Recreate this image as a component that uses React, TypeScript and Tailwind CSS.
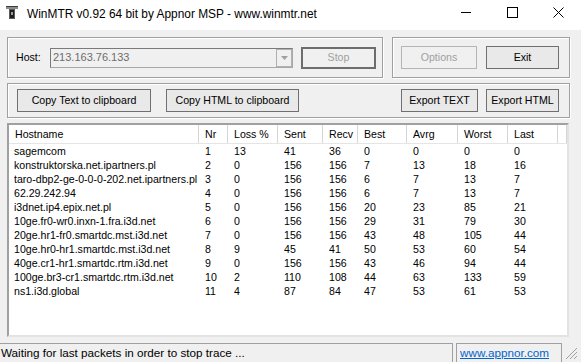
const rows = [
  ["sagemcom", "1", "13", "41", "36", "0", "0", "0", "0"],
  ["konstruktorska.net.ipartners.pl", "2", "0", "156", "156", "7", "13", "18", "16"],
  ["taro-dbp2-ge-0-0-0-202.net.ipartners.pl", "3", "0", "156", "156", "6", "7", "13", "7"],
  ["62.29.242.94", "4", "0", "156", "156", "6", "7", "13", "7"],
  ["i3dnet.ip4.epix.net.pl", "5", "0", "156", "156", "20", "23", "85", "21"],
  ["10ge.fr0-wr0.inxn-1.fra.i3d.net", "6", "0", "156", "156", "29", "31", "79", "30"],
  ["20ge.hr1-fr0.smartdc.mst.i3d.net", "7", "0", "156", "156", "43", "48", "105", "44"],
  ["10ge.hr0-hr1.smartdc.mst.i3d.net", "8", "9", "45", "41", "50", "53", "60", "54"],
  ["40ge.cr1-hr1.smartdc.rtm.i3d.net", "9", "0", "156", "156", "43", "46", "94", "44"],
  ["100ge.br3-cr1.smartdc.rtm.i3d.net", "10", "2", "110", "108", "44", "63", "133", "59"],
  ["ns1.i3d.global", "11", "4", "87", "84", "47", "53", "61", "53"],
];

const headers = ["Hostname", "Nr", "Loss %", "Sent", "Recv", "Best", "Avrg", "Worst", "Last"];
const widths = ["w-[190px]", "w-[29px]", "w-[50px]", "w-[45px]", "w-[35px]", "w-[49px]", "w-[51px]", "w-[50px]", "w-[50px]"];

const Btn = ({ label, w, disabled = false }: { label: string; w: string; disabled?: boolean }) => (
  <div
    className={`${w} h-[23px] flex items-center justify-center border ${
      disabled ? "border-[#b5b5b5] bg-[#f0f0f0] text-[#a0a0a0]" : "border-[#707070] bg-[#e9e9e9] text-black"
    }`}
  >
    {label}
  </div>
);

const Group = ({ className, children }: { className: string; children: React.ReactNode }) => (
  <div className={`border border-[#a0a0a0] shadow-[inset_1px_1px_0_#fff,1px_1px_0_#fff] flex items-center ${className}`}>
    {children}
  </div>
);

export default function App() {
  return (
    <div className="w-[581px] h-[362px] overflow-hidden flex flex-col bg-[#f0f0f0] text-[10.6px] font-['Liberation_Sans',Arial,sans-serif] text-black">
      {/* title bar */}
      <div className="h-[30px] bg-white flex shrink-0">
        <div className="pl-[6px] pt-[6px]">
          <svg width="12" height="13" viewBox="0 0 12 13">
            <rect x="0" y="0" width="12" height="3" fill="#8c8c8c" />
            <rect x="0" y="0" width="12" height="1" fill="#3c3c3c" />
            <rect x="3" y="3" width="6" height="10" fill="#5a5a5a" />
            <rect x="4" y="4" width="4" height="8" fill="#1e1e1e" />
            <rect x="5" y="6" width="2" height="3" fill="#9a9a9a" />
          </svg>
        </div>
        <div className="pl-[9px] pt-[6px] text-[11.9px] leading-[16px]">WinMTR v0.92 64 bit by Appnor MSP - www.winmtr.net</div>
        <div className="ml-auto flex">
          <div className="w-[46px] h-[30px] flex justify-center pt-[7px]">
            <svg width="10" height="10" viewBox="0 0 10 10"><path d="M0 5.5h10" stroke="#000" strokeWidth="1" /></svg>
          </div>
          <div className="w-[46px] h-[30px] flex justify-center pt-[7px]">
            <svg width="11" height="11" viewBox="0 0 11 11"><rect x="0.5" y="0.5" width="10" height="10" fill="none" stroke="#000" /></svg>
          </div>
          <div className="w-[46px] h-[30px] flex justify-center pt-[7px]">
            <svg width="11" height="11" viewBox="0 0 11 11"><path d="M0.5 0.5l10 10M10.5 0.5l-10 10" stroke="#000" strokeWidth="1" /></svg>
          </div>
        </div>
      </div>

      {/* top controls */}
      <div className="flex mt-[7px] ml-[7px] gap-[9px] shrink-0">
        <Group className="w-[376px] h-[41px] pl-[8px]">
          <span className="w-[34px]">Host:</span>
          <div className="w-[243px] h-[20px] border border-[#a8a8a8] border-l-[#7a7a7a] border-t-[#7a7a7a] bg-[#f0f0f0] flex items-center">
            <span className="pl-[2px] text-[#6d6d6d] text-[11px]">213.163.76.133</span>
            <div className="ml-auto w-[16px] h-[18px] border border-[#b0b0b0] flex items-center justify-center">
              <svg width="7" height="4" viewBox="0 0 7 4"><path d="M0 0h7L3.5 4z" fill="#a0a0a0" /></svg>
            </div>
          </div>
          <div className="ml-[8px] w-[75px] h-[22px] border-2 border-[#6d6d6d] bg-[#f0f0f0] text-[#a0a0a0] flex items-center justify-center">Stop</div>
        </Group>
        <Group className="w-[178px] h-[41px] pl-[8px] gap-[9px]">
          <Btn label="Options" w="w-[76px]" disabled />
          <Btn label="Exit" w="w-[73px]" />
        </Group>
      </div>

      {/* clipboard / export */}
      <div className="mt-[5px] ml-[7px] shrink-0">
        <Group className="w-[563px] h-[35px] pl-[9px] pr-[10px]">
          <Btn label="Copy Text to clipboard" w="w-[134px]" />
          <div className="ml-[15px]">
            <Btn label="Copy HTML to clipboard" w="w-[133px]" />
          </div>
          <div className="ml-auto flex gap-[8px]">
            <Btn label="Export TEXT" w="w-[77px]" />
            <Btn label="Export HTML" w="w-[73px]" />
          </div>
        </Group>
      </div>

      {/* list */}
      <div className="mt-[5px] ml-[7px] w-[562px] h-[214px] shrink-0 border-2 border-l-[#a0a0a0] border-t-[#a0a0a0] border-r-[#e3e3e3] border-b-[#e3e3e3] bg-white overflow-hidden">
        <div className="flex h-[19px] border-b border-[#e5e5e5]">
          {headers.map((h, i) => (
            <div key={h} className={`${widths[i]} pl-[6px] border-r border-[#d5d5d5] flex items-center leading-none`}>
              {h}
            </div>
          ))}
          <div className="flex-1 border-r border-[#d5d5d5]" />
        </div>
        {rows.map((r) => (
          <div key={r[0]} className="flex h-[14px] items-center leading-none">
            {r.map((c, i) => (
              <div key={i} className={`${widths[i]} ${i === 0 ? "pl-[5px]" : "pl-[6px]"} whitespace-nowrap`}>
                {c}
              </div>
            ))}
          </div>
        ))}
      </div>

      {/* status bar */}
      <div className="h-[25px] pt-[6px] flex text-[11.7px] shrink-0">
        <div className="w-[453px] border-t border-r border-[#a0a0a0] pl-[1px] leading-[17px]">
          Waiting for last packets in order to stop trace ...
        </div>
        <div className="ml-[3px] w-[106px] border-t border-l border-r border-[#a0a0a0] pl-[3px] leading-[17px]">
          <span className="text-[#0066cc] underline">www.appnor.com</span>
        </div>
        <div className="ml-auto pr-[3px] pt-[4px]">
          <svg width="13" height="13" viewBox="0 0 13 13">
            <path d="M12 1L1 12M12 5L5 12M12 9L9 12" stroke="#a0a0a0" strokeWidth="1" />
          </svg>
        </div>
      </div>
    </div>
  );
}
